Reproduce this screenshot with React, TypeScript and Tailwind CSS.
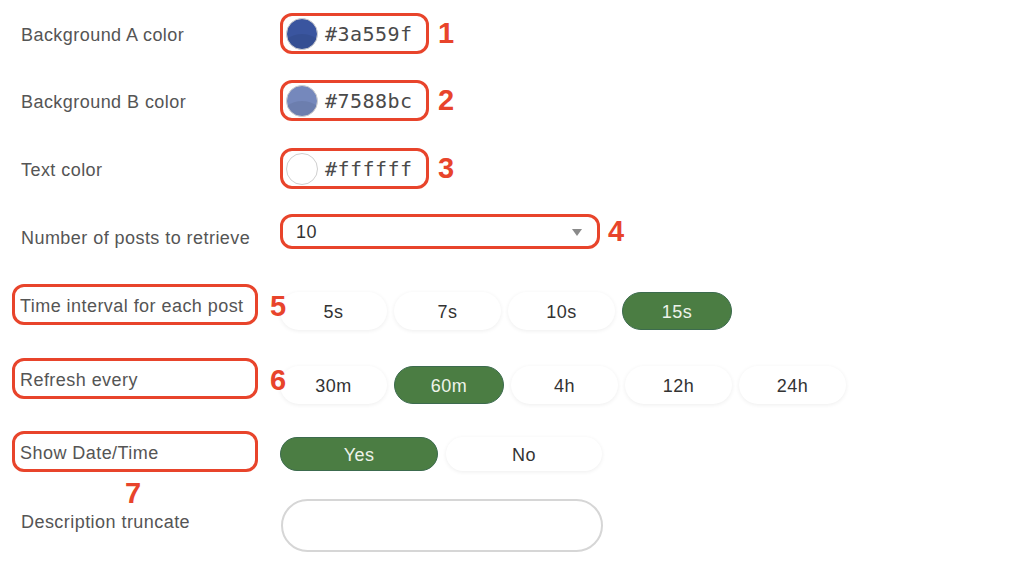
const RED = 'border-[#e8442b]';

function Num({ n }: { n: string }) {
  return (
    <span className="relative z-10 font-['Liberation_Sans',Arial,sans-serif] text-[29px] font-bold leading-none text-[#e8442b]">
      {n}
    </span>
  );
}

function Swatch({ color, hex, n }: { color: string; hex: string; n: string }) {
  return (
    <div className="flex items-center gap-2">
      <div className={`flex h-[41px] w-[149px] items-center rounded-[12px] border-[3px] ${RED} pl-[3px]`}>
        <div
          className="relative h-[32px] w-[32px] shrink-0 overflow-hidden rounded-full border border-[#cfcfcf]"
          style={{ backgroundColor: color }}
        >
          {color !== '#ffffff' && (
            <div className="absolute left-[-20%] top-[52%] h-full w-[140%] rounded-[50%] bg-black/[0.07]" />
          )}
        </div>
        <span className="ml-[7px] font-['DejaVu_Sans_Mono',monospace] text-[20px] leading-none text-[#4a4a4a]">{hex}</span>
      </div>
      <span className="ml-[1px] pt-[2px]">
        <Num n={n} />
      </span>
    </div>
  );
}

function Pill({ label, active, w = 'w-[107px]', h = 'h-[38px]' }: { label: string; active?: boolean; w?: string; h?: string }) {
  return (
    <button
      className={
        active
          ? `${w} ${h} rounded-full border border-[#3c6b4e] bg-[#4b7d43] pt-[2px] text-[18px] text-[#eef3ea]`
          : `${w} ${h} rounded-full bg-white pt-[2px] text-[18px] text-[#333] shadow-[0_1px_4px_rgba(0,0,0,0.07)]`
      }
    >
      {label}
    </button>
  );
}

function BoxedLabel({ text, n, under }: { text: string; n: string; under?: boolean }) {
  return (
    <div className="flex w-[268px] shrink-0 items-center">
      <div className={`relative flex h-[41px] w-[246px] shrink-0 items-center rounded-[12px] border-[3px] ${RED} pl-[5px] pt-[3px] text-[#555]`}>
        {text}
        {under && (
          <span className="absolute left-[110px] top-[calc(100%+10px)]">
            <Num n={n} />
          </span>
        )}
      </div>
      {!under && (
        <span className="ml-[12px] pt-[6px]">
          <Num n={n} />
        </span>
      )}
    </div>
  );
}

export default function App() {
  return (
    <div className="min-h-screen bg-white font-['Liberation_Sans',Arial,sans-serif] text-[18px] tracking-[0.45px]">
      <div className="flex flex-col pl-[12px] pt-[13px]">
        <div className="flex h-[41px] items-center">
          <div className="w-[268px] shrink-0 pl-[9px] pt-[3px] text-[#555]">Background A color</div>
          <Swatch color="#3a559f" hex="#3a559f" n="1" />
        </div>
        <div className="mt-[26px] flex h-[41px] items-center">
          <div className="w-[268px] shrink-0 pl-[9px] pt-[3px] text-[#555]">Background B color</div>
          <Swatch color="#7588bc" hex="#7588bc" n="2" />
        </div>
        <div className="mt-[27px] flex h-[41px] items-center">
          <div className="w-[268px] shrink-0 pl-[9px] pt-[3px] text-[#555]">Text color</div>
          <Swatch color="#ffffff" hex="#ffffff" n="3" />
        </div>

        <div className="mt-[25px] flex h-[35px] items-center">
          <div className="w-[268px] shrink-0 pl-[9px] pt-[14px] text-[#555]">Number of posts to retrieve</div>
          <div className="flex items-center gap-[8px]">
            <div className={`flex h-[35px] w-[320px] items-center justify-between rounded-[12px] border-[3px] ${RED} pl-[13px] pr-[15px] pt-[2px] text-[#333]`}>
              <span>10</span>
              <svg width="10" height="7" viewBox="0 0 10 7">
                <path d="M0 0h10L5 7z" fill="#8a8a8a" />
              </svg>
            </div>
            <span className="pt-[2px]">
              <Num n="4" />
            </span>
          </div>
        </div>

        <div className="mt-[35px] flex h-[41px] items-start">
          <BoxedLabel text="Time interval for each post" n="5" />
          <div className="mt-[8px] flex gap-[7px]">
            <Pill label="5s" />
            <Pill label="7s" />
            <Pill label="10s" />
            <Pill label="15s" active w="w-[110px]" />
          </div>
        </div>

        <div className="mt-[33px] flex h-[42px] items-start">
          <BoxedLabel text="Refresh every" n="6" />
          <div className="mt-[8px] flex gap-[7px]">
            <Pill label="30m" />
            <Pill label="60m" active w="w-[110px]" />
            <Pill label="4h" />
            <Pill label="12h" />
            <Pill label="24h" />
          </div>
        </div>

        <div className="mt-[31px] flex h-[41px] items-start">
          <BoxedLabel text="Show Date/Time" n="7" under />
          <div className="mt-[6px] flex gap-[8px]">
            <Pill label="Yes" active w="w-[158px]" h="h-[34px]" />
            <Pill label="No" w="w-[156px]" h="h-[34px]" />
          </div>
        </div>

        <div className="mt-[27px] flex items-start">
          <div className="mt-[10px] w-[268px] shrink-0 pl-[9px] text-[#555]">Description truncate</div>
          <div className="ml-[1px] h-[53px] w-[322px] rounded-full border-2 border-[#d6d6d6] bg-white" />
        </div>
      </div>
    </div>
  );
}
